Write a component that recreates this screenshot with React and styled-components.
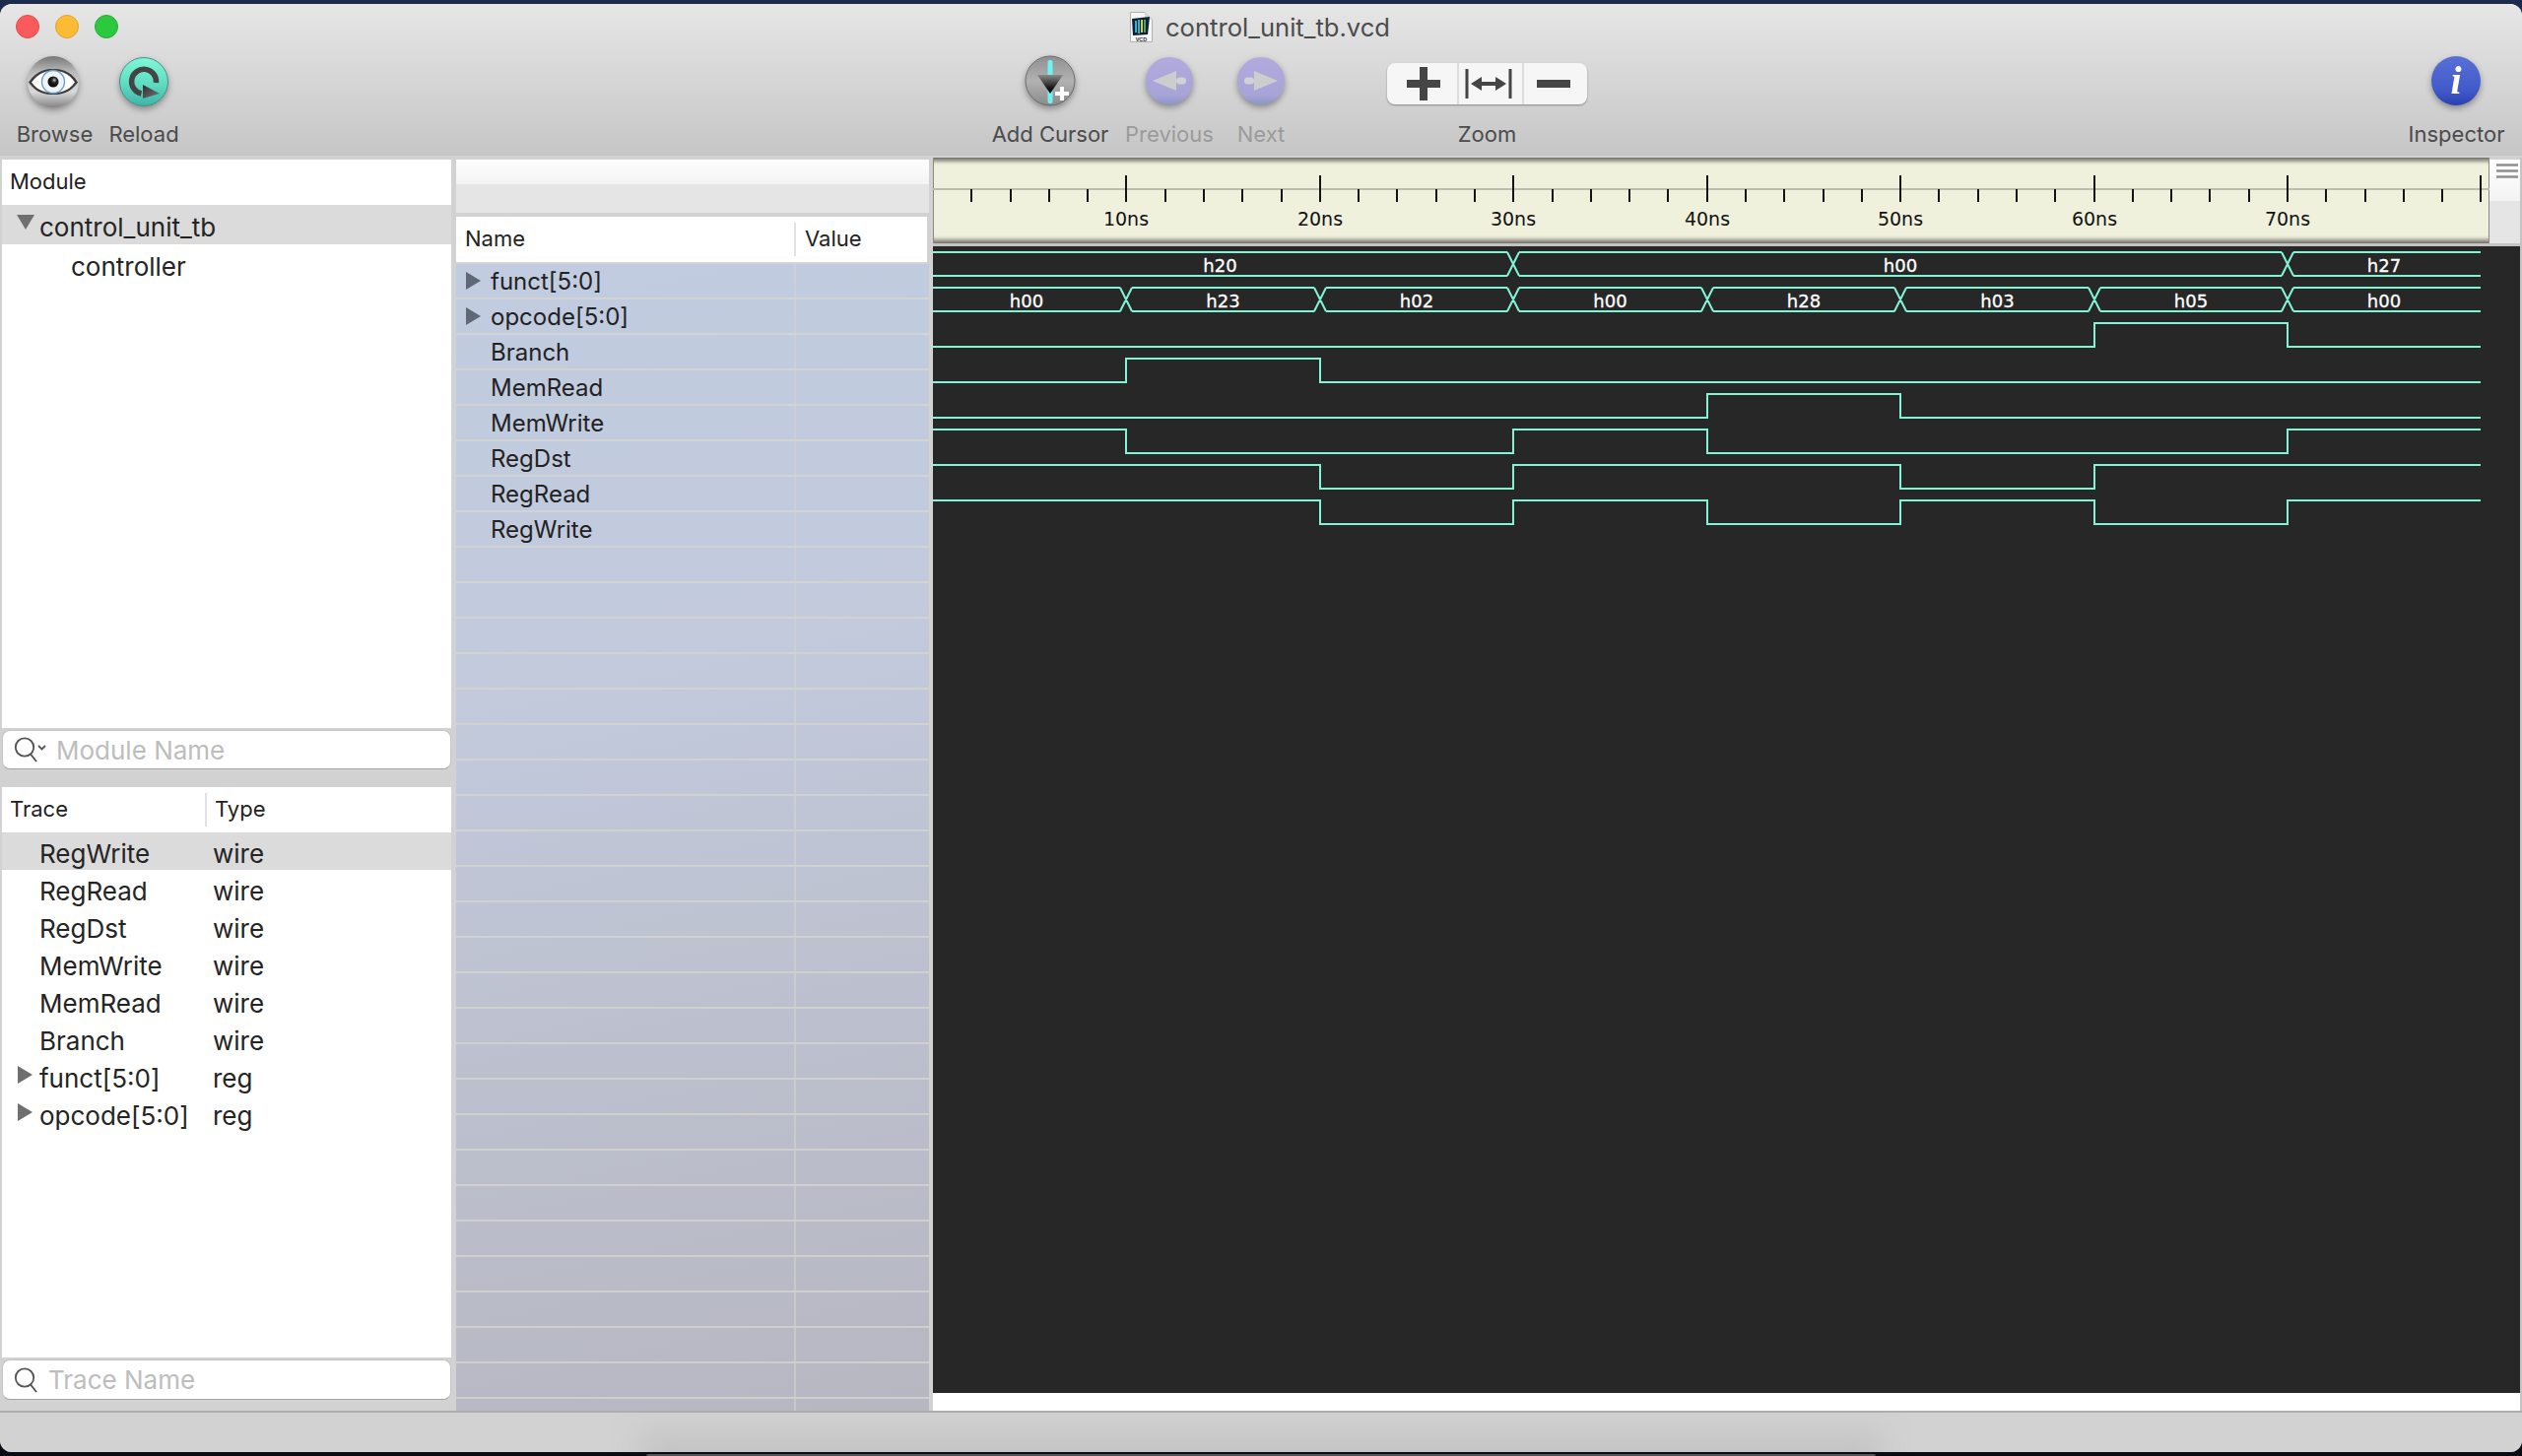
import React from 'react';
import styled, { createGlobalStyle } from 'styled-components';

const UI_FONT = `Inter, 'Noto Sans', 'Liberation Sans', sans-serif`;
const WAVE_FONT = `'DejaVu Sans', 'Liberation Sans', sans-serif`;
const WAVE_COLOR = '#80f5d6';

const GlobalStyle = createGlobalStyle`
  html, body {
    margin: 0;
    padding: 0;
    background: #0b0b16;
    overflow: hidden;
  }
  * { box-sizing: border-box; }
`;

const Page = styled.div`
  width: 2560px;
  height: 1478px;
  display: flex;
  flex-direction: column;
  font-family: ${UI_FONT};
  background: linear-gradient(to bottom, #1c2a4b 0, #1c2a4b 50%, #0b0b16 50%, #0b0b16 100%);
`;

const DesktopTop = styled.div`
  height: 4px;
  flex: none;
`;

const DesktopBottom = styled.div`
  height: 4px;
  flex: none;
  display: flex;
  justify-content: center;
  align-items: flex-end;
`;

const DockEdge = styled.div`
  width: 1248px;
  height: 2px;
  background: #58555a;
  border-radius: 3px 3px 0 0;
`;

const Window = styled.div`
  flex: 1;
  display: flex;
  flex-direction: column;
  border-radius: 12px;
  overflow: hidden;
  background: #d2d2d2;
`;

const Toolbar = styled.header`
  height: 154px;
  flex: none;
  background: linear-gradient(to bottom, #e6e6e6, #c6c6c6);
  display: flex;
  flex-direction: column;
`;

const TitleBar = styled.div`
  height: 46px;
  flex: none;
  display: grid;
  grid-template-columns: 1fr auto 1fr;
  align-items: center;
  padding: 0 18px 0 16px;
`;

const Lights = styled.div`
  display: flex;
  gap: 16px;
`;

const Light = styled.span`
  width: 24px;
  height: 24px;
  border-radius: 50%;
  background: ${(p) => p.$fill};
  border: 1px solid ${(p) => p.$edge};
`;

const Title = styled.div`
  display: flex;
  align-items: center;
  gap: 13px;
  font-size: 25.6px;
  color: #4c4c4c;
  padding-top: 1px;
`;

const ToolRow = styled.div`
  flex: 1;
  display: flex;
  padding: 5px 7px 0 8px;
`;

const ToolItem = styled.div`
  width: ${(p) => p.$w}px;
  margin-left: ${(p) => p.$ml || '0'};
  flex: none;
  display: flex;
  flex-direction: column;
  align-items: center;
`;

const IconSlot = styled.div`
  height: 56px;
  display: flex;
  align-items: center;
  justify-content: center;
  svg { filter: drop-shadow(0 3px 3px rgba(0, 0, 0, 0.35)); }
`;

const ToolLabel = styled.div`
  margin-top: 12px;
  height: 26px;
  line-height: 26px;
  font-size: 22px;
  white-space: nowrap;
  padding-left: ${(p) => p.$nudge || 0}px;
  color: ${(p) => (p.$disabled ? '#9b9b9b' : '#4b4b4b')};
`;

const Segmented = styled.div`
  margin-top: 4px;
  width: 203px;
  height: 42px;
  display: flex;
  background: #f6f6f6;
  border-radius: 8px;
  box-shadow: 0 1px 2px rgba(0, 0, 0, 0.35);
  overflow: hidden;
  svg { filter: none; }
`;

const Segment = styled.div`
  width: ${(p) => p.$w}px;
  flex: none;
  display: flex;
  align-items: center;
  justify-content: center;
  padding-left: ${(p) => p.$pl || 0}px;
  padding-right: ${(p) => p.$pr || 0}px;
  & + & { border-left: 2px solid #dcdcdc; }
`;

const Main = styled.main`
  height: 1276px;
  flex: none;
  display: flex;
  padding-top: 2px;
  border-bottom: 2px solid #adadad;
  background: #d2d2d2;
`;

const LeftColumn = styled.section`
  width: 456px;
  margin-left: 2px;
  padding-top: 2px;
  flex: none;
  display: flex;
  flex-direction: column;
`;

const Panel = styled.div`
  height: ${(p) => p.$h}px;
  flex: none;
  background: #fff;
  display: flex;
  flex-direction: column;
`;

const ColumnHead = styled.div`
  height: 46px;
  flex: none;
  display: grid;
  grid-template-columns: ${(p) => p.$cols};
  align-items: center;
  background: #fff;
  font-size: 22px;
  color: #222;
`;

const HeadCell = styled.div`
  height: 34px;
  line-height: 32px;
  padding-left: ${(p) => p.$pad}px;
  & + & { border-left: 2px solid #e2e2e2; }
`;

const TreeRow = styled.div`
  height: ${(p) => p.$h}px;
  flex: none;
  display: grid;
  grid-template-columns: ${(p) => p.$cols};
  align-items: center;
  padding-top: 4px;
  font-size: 26px;
  color: #242424;
  background: ${(p) => (p.$selected ? '#dbdbdb' : '#fff')};
`;

const TreeName = styled.div`
  position: relative;
  padding-left: ${(p) => p.$pad}px;
  white-space: nowrap;
`;

const TypeCell = styled.div`
  padding-left: 8px;
`;

const Triangle = styled.span`
  position: absolute;
  left: ${(p) => p.$left}px;
  top: ${(p) => p.$top}px;
  width: 0;
  height: 0;
  border-style: solid;
  border-color: transparent;
  ${(p) =>
    p.$open
      ? `border-width: 15px 9px 0 9px; border-top-color: #6f6f6f;`
      : `border-width: 9px 0 9px 15px; border-left-color: ${p.$color || '#6f6f6f'};`}
`;

const SearchBox = styled.div`
  height: ${(p) => p.$h}px;
  margin-top: 2px;
  flex: none;
  display: flex;
  align-items: center;
  background: #fff;
  border: 1px solid #c4c4c4;
  border-bottom-color: #a4a4a4;
  border-radius: 8px;
  padding-left: 11px;
  font-size: 26px;
  color: #bdbdbd;
`;

const SearchText = styled.span`
  margin-left: ${(p) => p.$gap}px;
`;

const PanelGap = styled.div`
  height: ${(p) => p.$h}px;
  flex: none;
`;

const MiddleColumn = styled.section`
  width: 480px;
  margin-left: 5px;
  margin-right: 4px;
  padding-top: 2px;
  flex: none;
  display: flex;
  flex-direction: column;
  min-height: 0;
`;

const ScrollCapTop = styled.div`
  height: 25px;
  flex: none;
  background: linear-gradient(to bottom, #ffffff, #f3f3f3);
`;

const ScrollCapBottom = styled.div`
  height: 29px;
  flex: none;
  background: #e5e5e5;
`;

const SignalHeadWrap = styled.div`
  margin-top: 4px;
  margin-right: 2px;
  flex: none;
  border-bottom: 2px solid #d4d4d4;
`;

const SignalList = styled.div`
  flex: 1;
  min-height: 0;
  overflow: hidden;
  background: linear-gradient(168deg, #c1cce0 0%, #c2cadc 35%, #bcbfcd 68%, #b6b7c1 100%);
`;

const SignalRow = styled.div`
  height: 36px;
  display: grid;
  grid-template-columns: 343px 1fr;
  border-bottom: 2px solid rgba(214, 214, 208, 0.75);
  font-size: 24px;
  color: #222;
`;

const SignalName = styled.div`
  position: relative;
  padding-left: 35px;
  line-height: 35px;
  white-space: nowrap;
`;

const SignalValue = styled.div`
  border-left: 2px solid rgba(214, 214, 208, 0.55);
`;

const RightColumn = styled.section`
  flex: 1;
  display: flex;
  flex-direction: column;
  border-right: 2px solid #c4c4c4;
  min-width: 0;
`;

const RulerRow = styled.div`
  height: 87px;
  flex: none;
  display: flex;
`;

const Ruler = styled.div`
  width: 1580px;
  flex: none;
  border-left: 1px solid #8a8a80;
  border-right: 1px solid #8a8a80;
  background: linear-gradient(
    to bottom,
    #6e6e68 0,
    #a6a69a 3px,
    #e4e5d2 6px,
    #f0f1dd 8px,
    #f0f1dd calc(100% - 8px),
    #e0e1ce calc(100% - 6px),
    #a6a69a calc(100% - 3px),
    #6e6e68 100%
  );
  svg { display: block; margin-left: -1px; }
`;

const RulerCorner = styled.div`
  flex: 1;
  margin-top: 2px;
  display: flex;
  flex-direction: column;
`;

const CornerTop = styled.div`
  height: 42px;
  padding: 4px 0 0 7px;
  background: linear-gradient(to bottom, #ffffff, #f3f3f3);
  svg { display: block; }
`;

const CornerBottom = styled.div`
  flex: 1;
  background: #e5e5e5;
`;

const RulerGap = styled.div`
  height: 3px;
  flex: none;
  background: #c4c4c4;
`;

const WaveArea = styled.div`
  height: 1164px;
  flex: none;
  background: #272727;
  svg { display: block; }
`;

const WaveScroller = styled.div`
  flex: 1;
  background: #fff;
`;

const StatusBar = styled.footer`
  flex: 1;
  position: relative;
  overflow: hidden;
  background: #d2d2d2;
  &::after {
    content: '';
    position: absolute;
    left: 650px;
    width: 1260px;
    top: 6px;
    bottom: -20px;
    background: linear-gradient(to bottom, #cfcfcf, #bcbcbc);
    filter: blur(14px);
  }
`;

// ---- toolbar drawings ----

const BrowseIcon = () => (
  <svg width="56" height="56" viewBox="0 0 56 56">
    <defs>
      <linearGradient id="browseBall" x1="0" y1="0" x2="0" y2="1">
        <stop offset="0" stopColor="#767676" />
        <stop offset="0.3" stopColor="#b8b8b8" />
        <stop offset="0.7" stopColor="#d8d8d8" />
        <stop offset="1" stopColor="#858585" />
      </linearGradient>
      <radialGradient id="browsePupil" cx="0.6" cy="0.35" r="0.7">
        <stop offset="0" stopColor="#bbb" />
        <stop offset="0.35" stopColor="#222" />
        <stop offset="1" stopColor="#000" />
      </radialGradient>
    </defs>
    <circle cx="28" cy="28" r="26" fill="url(#browseBall)" />
    <path d="M3 28.5C12 16 21 15 28 15s17 1 25 13.5C45 40 36 41 28 41S11 40 3 28.5z" fill="#3c3c3c" />
    <path d="M6 28.5C14 18 22 17 28 17s15 1 22 11.5C43 38 35 39 28 39S13 38 6 28.5z" fill="#fff" />
    <circle cx="28" cy="28" r="11.5" fill="#eef3f8" stroke="#6d9cc2" strokeWidth="1.4" />
    <circle cx="28" cy="28" r="5.5" fill="url(#browsePupil)" />
  </svg>
);

const ReloadIcon = () => (
  <svg width="56" height="56" viewBox="0 0 56 56">
    <defs>
      <linearGradient id="reloadBall" x1="0" y1="0" x2="0" y2="1">
        <stop offset="0" stopColor="#80f8d8" />
        <stop offset="0.55" stopColor="#5fdcc0" />
        <stop offset="1" stopColor="#3fb3aa" />
      </linearGradient>
      <linearGradient id="reloadPlay" x1="0" y1="0" x2="1" y2="1">
        <stop offset="0" stopColor="#2d2d2d" />
        <stop offset="1" stopColor="#777" />
      </linearGradient>
    </defs>
    <circle cx="28" cy="28" r="24.5" fill="url(#reloadBall)" stroke="#4c8f88" strokeWidth="1" />
    <path d="M40.5 29A12.5 12.5 0 1 0 25.5 40" fill="none" stroke="#444" strokeWidth="5.5" />
    <path d="M27 31L44 40L27 45z" fill="url(#reloadPlay)" />
  </svg>
);

const AddCursorIcon = () => (
  <svg width="56" height="56" viewBox="0 0 56 56">
    <defs>
      <linearGradient id="cursorBall" x1="0" y1="0" x2="0" y2="1">
        <stop offset="0" stopColor="#8f8f8f" />
        <stop offset="0.5" stopColor="#b2b2b2" />
        <stop offset="1" stopColor="#8a8a8a" />
      </linearGradient>
      <linearGradient id="cursorFunnel" x1="0" y1="0" x2="0" y2="1">
        <stop offset="0" stopColor="#8a8a8a" />
        <stop offset="0.7" stopColor="#161616" />
        <stop offset="1" stopColor="#000" />
      </linearGradient>
    </defs>
    <circle cx="28" cy="27" r="25" fill="url(#cursorBall)" stroke="#6c6c6c" strokeWidth="1" />
    <rect x="25.5" y="6" width="5" height="44" rx="2" fill="#6ff2f2" />
    <path d="M15 21H41L28 40z" fill="url(#cursorFunnel)" />
    <path d="M38 33h4v5h5v4h-5v5h-4v-5h-5v-4h5z" fill="#fff" />
  </svg>
);

const StepIcon = ({ flip }) => (
  <svg width="56" height="56" viewBox="0 0 56 56">
    <defs>
      <linearGradient id="stepBall" x1="0" y1="0" x2="0" y2="1">
        <stop offset="0" stopColor="#b3aade" />
        <stop offset="0.8" stopColor="#a7a4d8" />
        <stop offset="1" stopColor="#8f96c6" />
      </linearGradient>
    </defs>
    <g transform={flip ? 'matrix(-1 0 0 1 56 0)' : undefined}>
      <circle cx="28" cy="27" r="24" fill="url(#stepBall)" />
      <path d="M11 27L35 17V37z" fill="#cdcdcd" />
      <rect x="35" y="23.5" width="10" height="7" rx="3.5" fill="#d2d2d2" />
    </g>
  </svg>
);

const InspectorIcon = () => (
  <svg width="56" height="56" viewBox="0 0 56 56">
    <defs>
      <linearGradient id="infoBall" x1="0" y1="0" x2="0" y2="1">
        <stop offset="0" stopColor="#5a70d8" />
        <stop offset="0.7" stopColor="#4159c8" />
        <stop offset="1" stopColor="#2a40b2" />
      </linearGradient>
    </defs>
    <circle cx="28" cy="27" r="25" fill="url(#infoBall)" />
    <text x="28" y="40" textAnchor="middle" fontFamily="'Liberation Serif', serif" fontStyle="italic" fontWeight="700" fontSize="40" fill="#fff">
      i
    </text>
  </svg>
);

const FileIcon = () => (
  <svg width="23" height="31" viewBox="0 0 23 31">
    <path d="M.5.5H15L22.5 8V30.5H.5z" fill="#f6f6f6" stroke="#b0b0b0" />
    <path d="M15 .5V8H22.5z" fill="#d8d8d8" />
    <path d="M2 7L20 5L18 23L3 24z" fill="#10203a" />
    <path d="M6 9V21M9 8V22" stroke="#2fb5c8" strokeWidth="2" />
    <path d="M12 8V21" stroke="#d8cb40" strokeWidth="2" />
    <path d="M15 8V21" stroke="#4aa84a" strokeWidth="2" />
    <text x="11.5" y="29.5" textAnchor="middle" fontFamily="'Liberation Sans', sans-serif" fontWeight="700" fontSize="5.5" fill="#333">
      VCD
    </text>
  </svg>
);

const PlusIcon = () => (
  <svg width="36" height="36" viewBox="0 0 36 36">
    <path d="M14 1H22V14H35V22H22V35H14V22H1V14H14z" fill="#454545" />
  </svg>
);

const FitIcon = () => (
  <svg width="48" height="32" viewBox="0 0 48 32">
    <path d="M2 1V31M46 1V31" stroke="#454545" strokeWidth="3" />
    <path d="M6 16L17 9V14H31V9L42 16L31 23V18H17V23z" fill="#454545" />
  </svg>
);

const MinusIcon = () => (
  <svg width="36" height="10" viewBox="0 0 36 10">
    <rect x="1" y="1" width="34" height="8" fill="#454545" />
  </svg>
);

const MagnifierIcon = ({ menu }) => (
  <svg width={menu ? 34 : 26} height="28" viewBox={menu ? '0 0 34 28' : '0 0 26 28'}>
    <circle cx="11" cy="11.5" r="9.2" fill="none" stroke="#555" strokeWidth="1.8" />
    <path d="M17 18.5L23 26" stroke="#555" strokeWidth="2" />
    {menu && <path d="M25 10L28.5 13.5L32 10" fill="none" stroke="#555" strokeWidth="1.8" />}
  </svg>
);

const HamburgerIcon = () => (
  <svg width="22" height="16" viewBox="0 0 22 16">
    <path d="M0 1.5H22M0 7.5H22M0 13.5H22" stroke="#8e8e8e" strokeWidth="2.4" />
  </svg>
);

// ---- waveforms ----

const PERIOD = 196.43;
const WAVE_END = 1571;
const ROW_TOP = 6;
const ROW_PITCH = 36;
const ROW_HIGH = 24;
const tx = (n) => Math.round(n * PERIOD);

const BUSES = [
  { row: 0, segs: [[-0.03, 3, 'h20'], [3, 7, 'h00'], [7, 8, 'h27']] },
  {
    row: 1,
    segs: [
      [-0.03, 1, 'h00'], [1, 2, 'h23'], [2, 3, 'h02'], [3, 4, 'h00'],
      [4, 5, 'h28'], [5, 6, 'h03'], [6, 7, 'h05'], [7, 8, 'h00'],
    ],
  },
];

// level per 10ns slot
const WIRES = [
  { row: 2, levels: [0, 0, 0, 0, 0, 0, 1, 0] },
  { row: 3, levels: [0, 1, 0, 0, 0, 0, 0, 0] },
  { row: 4, levels: [0, 0, 0, 0, 1, 0, 0, 0] },
  { row: 5, levels: [1, 0, 0, 1, 0, 0, 0, 1] },
  { row: 6, levels: [1, 1, 0, 1, 1, 0, 1, 1] },
  { row: 7, levels: [1, 1, 0, 1, 0, 1, 0, 1] },
];

const wirePath = ({ row, levels }) => {
  const top = ROW_TOP + row * ROW_PITCH;
  const yOf = (l) => (l ? top : top + ROW_HIGH);
  let d = `M0 ${yOf(levels[0])}`;
  levels.forEach((l, i) => {
    if (i > 0 && l !== levels[i - 1]) d += `H${tx(i)}V${yOf(l)}`;
  });
  return `${d}H${WAVE_END}`;
};

const busPath = ({ row, segs }) => {
  const top = ROW_TOP + row * ROW_PITCH;
  const bottom = top + ROW_HIGH;
  const cuts = segs.slice(1).map((s) => tx(s[0]));
  const xs = [-6, ...cuts, WAVE_END + 6];
  const rails = xs
    .slice(0, -1)
    .map((x, i) => `M${x + 6} ${top}H${xs[i + 1] - 6}M${x + 6} ${bottom}H${xs[i + 1] - 6}`)
    .join('');
  const crossings = cuts
    .map((x) => `M${x - 6} ${top}L${x + 6} ${bottom}M${x - 6} ${bottom}L${x + 6} ${top}`)
    .join('');
  return rails + crossings;
};

const WaveChart = () => (
  <svg width="1611" height="1164" viewBox="0 0 1611 1164">
    <g fill="none" stroke={WAVE_COLOR} strokeWidth="2">
      {WIRES.map((w) => (
        <path key={w.row} d={wirePath(w)} />
      ))}
      {BUSES.map((b) => (
        <path key={b.row} d={busPath(b)} />
      ))}
    </g>
    {BUSES.map((b) =>
      b.segs.map(([from, to, label]) => (
        <text
          key={`${b.row}-${from}`}
          x={(tx(from) + tx(to)) / 2}
          y={ROW_TOP + b.row * ROW_PITCH + 20}
          textAnchor="middle"
          fontFamily={WAVE_FONT}
          fontSize="18"
          fill="#fff"
          stroke="#fff"
          strokeWidth="0.3"
        >
          {label}
        </text>
      ))
    )}
  </svg>
);

const RulerChart = () => {
  const ticks = Array.from({ length: 40 }, (_, i) => i + 1);
  const labels = [1, 2, 3, 4, 5, 6, 7];
  return (
    <svg width="1580" height="87" viewBox="0 0 1580 87">
      <rect x="0" y="31" width="1580" height="2" fill="#bcbcb0" />
      {ticks.map((n) => {
        const x = Math.round((n * PERIOD) / 5);
        return <rect key={n} x={x - 1} y={n % 5 === 0 ? 18 : 32} width="2" height={n % 5 === 0 ? 27 : 13} fill="#141414" />;
      })}
      {labels.map((n) => (
        <text key={n} x={tx(n)} y="69" textAnchor="middle" fontFamily={WAVE_FONT} fontSize="19" fill="#111">
          {n}0ns
        </text>
      ))}
    </svg>
  );
};

// ---- data ----

const TRACES = [
  ['RegWrite', 'wire'],
  ['RegRead', 'wire'],
  ['RegDst', 'wire'],
  ['MemWrite', 'wire'],
  ['MemRead', 'wire'],
  ['Branch', 'wire'],
  ['funct[5:0]', 'reg', true],
  ['opcode[5:0]', 'reg', true],
];

const SIGNALS = [
  ['funct[5:0]', true],
  ['opcode[5:0]', true],
  ['Branch'],
  ['MemRead'],
  ['MemWrite'],
  ['RegDst'],
  ['RegRead'],
  ['RegWrite'],
  ...Array.from({ length: 25 }, () => ['']),
];

function App() {
  return (
    <Page>
      <GlobalStyle />
      <DesktopTop />
      <Window>
        <Toolbar>
          <TitleBar>
            <Lights>
              <Light $fill="#fb5a5c" $edge="#e24a4c" />
              <Light $fill="#fdbb34" $edge="#e0a22a" />
              <Light $fill="#2cc840" $edge="#25ac36" />
            </Lights>
            <Title>
              <FileIcon />
              control_unit_tb.vcd
            </Title>
          </TitleBar>
          <ToolRow>
            <ToolItem $w={92}>
              <IconSlot><BrowseIcon /></IconSlot>
              <ToolLabel $nudge={3}>Browse</ToolLabel>
            </ToolItem>
            <ToolItem $w={92}>
              <IconSlot><ReloadIcon /></IconSlot>
              <ToolLabel>Reload</ToolLabel>
            </ToolItem>
            <ToolItem $w={118} $ml="815px">
              <IconSlot><AddCursorIcon /></IconSlot>
              <ToolLabel>Add Cursor</ToolLabel>
            </ToolItem>
            <ToolItem $w={124}>
              <IconSlot><StepIcon /></IconSlot>
              <ToolLabel $disabled>Previous</ToolLabel>
            </ToolItem>
            <ToolItem $w={62}>
              <IconSlot><StepIcon flip /></IconSlot>
              <ToolLabel $disabled>Next</ToolLabel>
            </ToolItem>
            <ToolItem $w={203} $ml="97px">
              <IconSlot>
                <Segmented>
                  <Segment $w={71} $pl={3}><PlusIcon /></Segment>
                  <Segment $w={66} $pr={4}><FitIcon /></Segment>
                  <Segment $w={66} $pr={4}><MinusIcon /></Segment>
                </Segmented>
              </IconSlot>
              <ToolLabel>Zoom</ToolLabel>
            </ToolItem>
            <ToolItem $w={120} $ml="auto">
              <IconSlot><InspectorIcon /></IconSlot>
              <ToolLabel $nudge={1}>Inspector</ToolLabel>
            </ToolItem>
          </ToolRow>
        </Toolbar>

        <Main>
          <LeftColumn>
            <Panel $h={577}>
              <ColumnHead $cols="1fr">
                <HeadCell $pad={8}>Module</HeadCell>
              </ColumnHead>
              <TreeRow $h={40} $cols="1fr" $selected>
                <TreeName $pad={38}>
                  <Triangle $open $left={15} $top={3} />
                  control_unit_tb
                </TreeName>
              </TreeRow>
              <TreeRow $h={40} $cols="1fr">
                <TreeName $pad={70}>controller</TreeName>
              </TreeRow>
            </Panel>
            <SearchBox $h={40}>
              <MagnifierIcon menu />
              <SearchText $gap={9}>Module Name</SearchText>
            </SearchBox>
            <PanelGap $h={18} />
            <Panel $h={579}>
              <ColumnHead $cols="206px 1fr">
                <HeadCell $pad={8}>Trace</HeadCell>
                <HeadCell $pad={8}>Type</HeadCell>
              </ColumnHead>
              {TRACES.map(([name, type, expandable], i) => (
                <TreeRow key={name} $h={38} $cols="206px 1fr" $selected={i === 0}>
                  <TreeName $pad={38}>
                    {expandable && <Triangle $left={16} $top={3} />}
                    {name}
                  </TreeName>
                  <TypeCell>{type}</TypeCell>
                </TreeRow>
              ))}
            </Panel>
            <SearchBox $h={41}>
              <MagnifierIcon />
              <SearchText $gap={9}>Trace Name</SearchText>
            </SearchBox>
          </LeftColumn>

          <MiddleColumn>
            <ScrollCapTop />
            <ScrollCapBottom />
            <SignalHeadWrap>
              <ColumnHead $cols="343px 1fr">
                <HeadCell $pad={9}>Name</HeadCell>
                <HeadCell $pad={9}>Value</HeadCell>
              </ColumnHead>
            </SignalHeadWrap>
            <SignalList>
              {SIGNALS.map(([name, expandable], i) => (
                <SignalRow key={i}>
                  <SignalName>
                    {expandable && <Triangle $left={10} $top={8} $color="#606776" />}
                    {name}
                  </SignalName>
                  <SignalValue />
                </SignalRow>
              ))}
            </SignalList>
          </MiddleColumn>

          <RightColumn>
            <RulerRow>
              <Ruler><RulerChart /></Ruler>
              <RulerCorner>
                <CornerTop><HamburgerIcon /></CornerTop>
                <CornerBottom />
              </RulerCorner>
            </RulerRow>
            <RulerGap />
            <WaveArea><WaveChart /></WaveArea>
            <WaveScroller />
          </RightColumn>
        </Main>

        <StatusBar />
      </Window>
      <DesktopBottom><DockEdge /></DesktopBottom>
    </Page>
  );
}

export default App;
